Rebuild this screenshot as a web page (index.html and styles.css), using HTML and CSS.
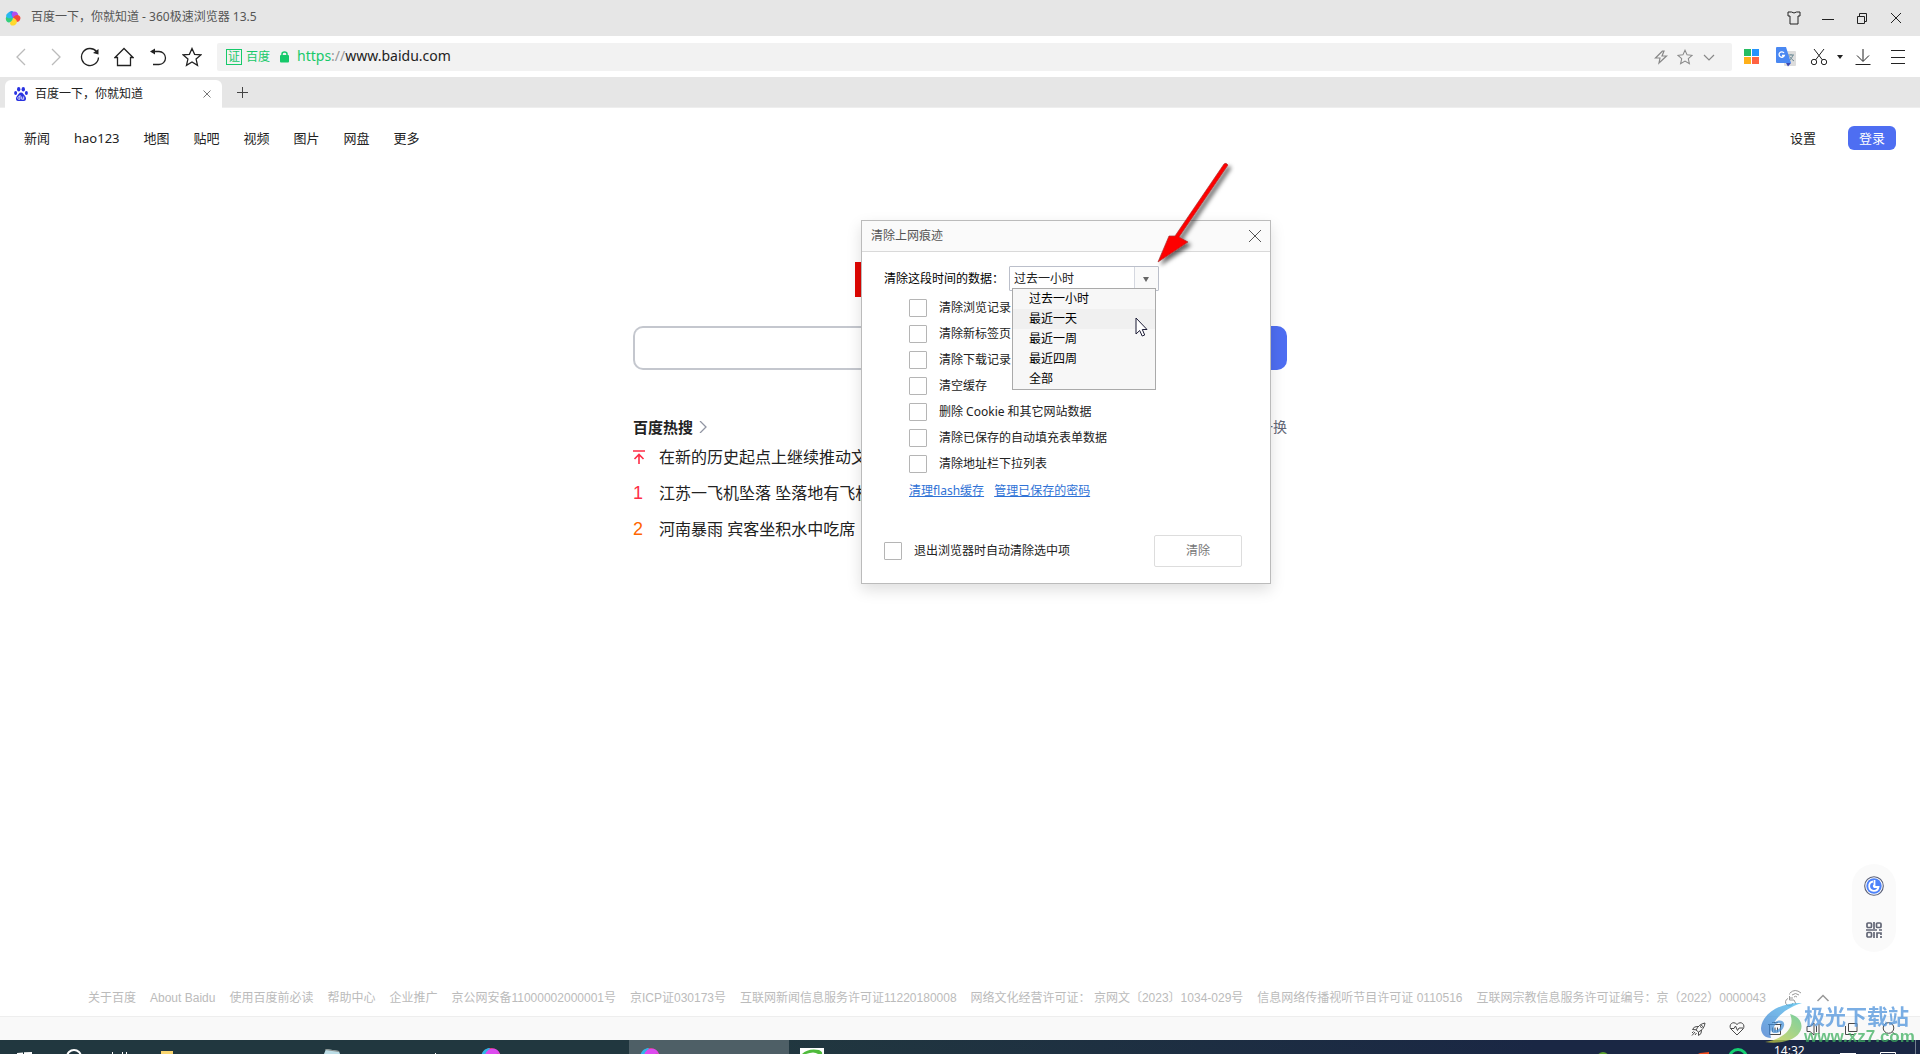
FILE: index.html
```html
<!DOCTYPE html>
<html lang="zh-CN">
<head>
<meta charset="utf-8">
<title>百度一下，你就知道</title>
<link rel="stylesheet" href="styles.css">
</head>
<body>
<svg class="defs" width="0" height="0" aria-hidden="true">
  <symbol id="pinwheel" viewBox="0 0 16 16">
    <path d="M8 8C3 8 2 3 5 1.500Q8 0 9.500 3Z" fill="#3a7df0"/>
    <path d="M8 8C5 4 8 0 11.500 2Q14 4 13 6Z" fill="#b04df0"/>
    <path d="M8 8C10 4 15 4 15.500 8Q15 12 11.500 12Z" fill="#f5483c"/>
    <path d="M8 8C13 9 13 14 9 15.500Q5 16 5 13Z" fill="#ffd92e"/>
    <path d="M8 8C7 13 2 14 1 10Q0 7 3 5.500Z" fill="#34cf7c"/>
    <path d="M8 8C4 9 0 8 1.500 4.500Q3 2 5 2Z" fill="#27b8f0"/>
  </symbol>
  <symbol id="star" viewBox="0 0 20 20"><path d="M10 1.500L12.600 7.300 18.800 7.900 14.100 12.100 15.500 18.300 10 15 4.500 18.300 5.900 12.100 1.200 7.900 7.400 7.300Z" fill="none" stroke="currentColor" stroke-width="1.300"/></symbol>
  <symbol id="orb" viewBox="0 0 20 20">
    <circle cx="10" cy="10" r="10" fill="#e83c4e"/>
    <path d="M0 10C0 4 4 0 9 0L5 10Z" fill="#2fb4e8"/><path d="M4 7C6-1 16-2 19 6Q12 5 9 10Z" fill="#dc4af0"/>
  </symbol>
</svg>

<header class="titlebar">
  <svg class="app-logo" width="16" height="16"><use href="#pinwheel"/></svg>
  <span class="window-title">百度一下，你就知道 - 360极速浏览器 13.5</span>
  <div class="window-buttons">
    <button aria-label="皮肤"><svg width="14" height="14" viewBox="0 0 14 14"><path d="M1 1H4.500Q7 3 9.500 1H13V5H11V13H3V5H1Z"/></svg></button>
    <button aria-label="最小化"><svg width="14" height="14" viewBox="0 0 14 14"><path d="M1 8.500H13"/></svg></button>
    <button aria-label="还原"><svg width="14" height="14" viewBox="0 0 14 14"><path d="M2.500 5.500H9.500V12.500H2.500ZM4.500 5V2.500H11.500V10.500H10"/></svg></button>
    <button aria-label="关闭"><svg width="14" height="14" viewBox="0 0 14 14"><path d="M2 2L12 12M12 2L2 12"/></svg></button>
  </div>
</header>

<div class="toolbar">
  <div class="nav-buttons">
    <button aria-label="后退" class="faded"><svg width="20" height="20" viewBox="0 0 20 20"><path d="M14 2L6 10 14 18"/></svg></button>
    <button aria-label="前进" class="faded"><svg width="20" height="20" viewBox="0 0 20 20"><path d="M6 2L14 10 6 18"/></svg></button>
    <button aria-label="刷新"><svg width="20" height="20" viewBox="0 0 20 20"><path d="M16.500 4.500A8.500 8.500 0 1 0 18.500 10.500"/><path d="M18.500 2V7.500L13 6Z" fill="currentColor" stroke="none"/></svg></button>
    <button aria-label="主页"><svg width="20" height="20" viewBox="0 0 20 20"><path d="M1 10.500L10 1.500 19 10.500H16.500V18.500H3.500V10.500Z"/></svg></button>
    <button aria-label="恢复"><svg width="20" height="20" viewBox="0 0 20 20"><path d="M4 4.500H11A6.500 6.500 0 0 1 11 17.500H5"/><path d="M2 4.500L7 1.500V7.500Z" fill="currentColor" stroke="none"/></svg></button>
    <button aria-label="收藏"><svg width="20" height="20"><use href="#star"/></svg></button>
  </div>
  <div class="address">
    <span class="cert">证</span>
    <span class="site">百度</span>
    <svg class="lock" width="9" height="12" viewBox="0 0 9 12"><rect y="4" width="9" height="7.500" rx="1" fill="#16c96a"/><path d="M2 5V3Q2 1 4.500 1T7 3V5" fill="none" stroke="#16c96a" stroke-width="1.500"/></svg>
    <span class="url"><span class="scheme">https</span><span class="slashes">://</span>www.baidu.com</span>
    <div class="address-icons">
      <svg width="16" height="16" viewBox="0 0 16 16"><path d="M9.500 2L2.500 9H7L6 14 13.500 7H9L11 2Z"/></svg>
      <svg width="16" height="16"><use href="#star"/></svg>
      <svg width="16" height="16" viewBox="0 0 16 16"><path d="M3 6L8 11 13 6"/></svg>
    </div>
  </div>
  <div class="extensions">
    <button class="w38" aria-label="应用"><svg width="15" height="15" viewBox="0 0 15 15"><g stroke="none"><path fill="#26bd62" d="M0 0H7V7H0z"/><path fill="#2693fc" d="M8 0H15V7H8z"/><path fill="#ffb01a" d="M0 8H7V15H0z"/><path fill="#ff6242" d="M8 8H15V15H8z"/></g></svg></button>
    <button class="w32" aria-label="翻译"><svg width="20" height="20" viewBox="0 0 20 20"><g stroke="none"><rect x="8" y="4" width="12" height="15" rx="1" fill="#dcdcdc"/><path d="M12 8H18M15 7V8M17 8Q16 12 12.500 14M13.500 9.500Q15 12 18 14" stroke="#6f8c97" fill="none"/><path d="M1 0H10L15 16H1Q0 16 0 15V1Q0 0 1 0Z" fill="#4a88f2"/><path d="M10 16H15L12 19.500Z" fill="#3948b5"/><path d="M8 6A2.700 2.700 0 1 0 8.300 8.500H6" stroke="#fff" stroke-width="1.300" fill="none"/></g></svg></button>
    <button class="w34" aria-label="截图"><svg width="18" height="18" viewBox="0 0 18 18"><path d="M4 1L12.500 12M14 1L5.500 12"/><circle cx="4" cy="14" r="2.700"/><circle cx="14" cy="14" r="2.700"/></svg></button>
    <button class="w8" aria-label="更多截图选项"><svg width="6" height="4" viewBox="0 0 6 4"><path d="M0 0H6L3 4Z" fill="currentColor" stroke="none"/></svg></button>
    <button class="w38" aria-label="下载"><svg width="18" height="18" viewBox="0 0 18 18"><path d="M9 1V13M3 7.500L9 13.500 15 7.500M1.500 16.500H16.500"/></svg></button>
    <button class="w32" aria-label="菜单"><svg width="16" height="16" viewBox="0 0 16 16"><path d="M1 1.500H15M1 8.500H15M1 14.500H15"/></svg></button>
  </div>
</div>

<div class="tabstrip">
  <div class="tab">
    <svg width="14" height="14" viewBox="0 0 14 14" fill="#2932e1"><ellipse cx="4.700" cy="2.300" rx="1.700" ry="2.200"/><ellipse cx="9.300" cy="2.300" rx="1.700" ry="2.200"/><ellipse cx="1.600" cy="6" rx="1.500" ry="2"/><ellipse cx="12.400" cy="6" rx="1.500" ry="2"/><path d="M7 5.500C9 5.500 9.500 7.500 11 9S12.500 14 10 14H4C1.500 14 1.500 10.500 3 9S5 5.500 7 5.500Z"/><path d="M6 8V12.200H4.500A1.300 1.300 0 0 1 4.500 9.800H6M7.700 9.500V12.200H9.700V9.500" fill="none" stroke="#fff" stroke-width=".8"/></svg>
    <span class="tab-title">百度一下，你就知道</span>
    <button aria-label="关闭标签"><svg width="8" height="8" viewBox="0 0 8 8"><path d="M.5 .5L7.500 7.500M7.500 .5L.5 7.500"/></svg></button>
  </div>
  <button class="new-tab" aria-label="新标签"><svg width="12" height="12" viewBox="0 0 12 12"><path d="M6.500 1V12M1 6.500H12"/></svg></button>
</div>

<main class="page">
  <nav class="links">
    <a href="#">新闻</a><a href="#">hao123</a><a href="#">地图</a><a href="#">贴吧</a><a href="#">视频</a><a href="#">图片</a><a href="#">网盘</a><a href="#">更多</a>
    <a href="#" class="settings">设置</a>
    <button class="login">登录</button>
  </nav>
  <section class="center">
    <div class="brand"></div>
    <form class="search">
      <input type="text" aria-label="搜索">
      <button type="button" aria-label="百度一下"></button>
    </form>
    <div class="hot-head">
      <a href="#" class="hot-title">百度热搜</a>
      <svg width="8" height="12" viewBox="0 0 8 12"><path d="M1 0L7 6 1 12" fill="none" stroke="#9195a3" stroke-width="1.300"/></svg>
      <a href="#" class="swap">换一换</a>
    </div>
    <ol class="hot-list">
      <li><span class="rank r0"><svg width="12" height="14" viewBox="0 0 12 14"><path d="M0 1H12M6 14V5M1.500 9L6 4.500 10.500 9" fill="none" stroke="#fe2d46" stroke-width="1.600"/></svg></span><a href="#">在新的历史起点上继续推动文</a></li>
      <li><span class="rank r1">1</span><a href="#">江苏一飞机坠落 坠落地有飞机</a></li>
      <li><span class="rank r2">2</span><a href="#">河南暴雨 宾客坐积水中吃席</a><span class="tag"></span></li>
    </ol>
  </section>
  <aside class="side-tools">
    <button aria-label="助手"><svg width="20" height="20" viewBox="0 0 20 20"><circle cx="10" cy="10" r="9.300" fill="#fff" stroke="#5a6078" stroke-width="1.100"/><circle cx="10" cy="10" r="7.700" fill="#4e83fa"/><path d="M9 5.500A4.700 4.700 0 1 0 14.500 11H10.500V4" fill="none" stroke="#fff" stroke-width="1.800"/><circle cx="10" cy="10" r="1.200" fill="#fff"/></svg></button>
    <button aria-label="二维码"><svg width="16" height="16" viewBox="0 0 16 16" fill="none" stroke="#626675" stroke-width="1.700"><rect x="1" y="1" width="4.500" height="4.500" rx="1"/><rect x="10.500" y="1" width="4.500" height="4.500" rx="1"/><rect x="1" y="10.500" width="4.500" height="4.500" rx="1"/><path d="M8 0V7M0 8H11M13 8H16M8 10V16M11 16V11H15V13M15 14V16"/></svg></button>
  </aside>
  <footer class="legal">
    <a href="#">关于百度</a><a href="#">About Baidu</a><a href="#">使用百度前必读</a><a href="#">帮助中心</a><a href="#">企业推广</a><a href="#">京公网安备11000002000001号</a><a href="#">京ICP证030173号</a><span>互联网新闻信息服务许可证11220180008</span><span>网络文化经营许可证： 京网文〔2023〕1034-029号</span><span>信息网络传播视听节目许可证 0110516</span><span>互联网宗教信息服务许可证编号：京（2022）0000043</span>
    <svg class="access" width="18" height="18" viewBox="0 0 18 18"><path d="M5.500 7V11H10L12 15M5.500 9H9M4 9.500A3.800 3.800 0 1 0 9 14M5.500 4.500V5.500M6 4Q11-1 17 4M8 6Q11.500 3 15 6M10 8Q11.500 6.500 13 8"/></svg>
    <svg width="14" height="8" viewBox="0 0 14 8"><path d="M1.500 7L7 1.500 12.500 7" stroke-width="1.500"/></svg>
  </footer>
</main>

<div class="statusbar">
  <svg width="16" height="16" viewBox="0 0 16 16"><path d="M5 9Q8 3 14 2Q13.500 8 7.500 11ZM7 5.500L3.500 6 1.500 8.500 5 8.800M10.500 9L10 12.500 7.500 14.500 7.500 11M4 11L1 14.500M5.500 12L4 14M2.500 10.500L1 12"/><circle cx="10.500" cy="5.500" r="1"/></svg>
  <svg width="16" height="16" viewBox="0 0 16 16"><path d="M8 14L2 8C-1 4 4-1 8 3.500C12-1 17 4 14 8ZM1.500 7.500H5L6.500 5 8.500 9.500 10 7H14"/></svg>
  <svg width="16" height="16" viewBox="0 0 16 16"><path d="M2.500 4V13.500H13.500V4M1 3.500H15M5 1.500H11M5.500 6.500V11M8 6.500V11M10.500 6.500V11"/></svg>
  <svg width="16" height="16" viewBox="0 0 16 16"><path d="M2 5.500H5L9 2V14L5 10.500H2ZM11.500 5V11M14 3V13"/></svg>
  <svg width="16" height="16" viewBox="0 0 16 16"><path d="M5.500 2.500H14V10.500H5.500ZM2.500 5V13.500H11"/></svg>
  <svg width="16" height="16" viewBox="0 0 16 16"><circle cx="7.500" cy="7" r="5.300"/><path d="M11.500 11L14.500 14"/></svg>
</div>

<div class="taskbar">
  <svg class="task-left" width="629" height="14" viewBox="0 0 629 14">
    <path d="M17 13L23 12.500V14H17ZM24 12.300L32 12V14H24Z" fill="#fff"/>
    <circle cx="74" cy="17" r="7" fill="none" stroke="#fff" stroke-width="2"/>
    <path d="M112.500 12V14M122.500 12V14M126.500 12V14M435.500 13V14" stroke="#fff"/>
    <path d="M161 11H173V14H161Z" fill="#f9d56e"/>
    <path d="M326 9L339 11 340 14H324Z" fill="#bcdde6"/><path d="M326 9L339 11V12L325 10Z" fill="#8a8f8c"/>
    <use href="#orb" x="481" y="8" width="20" height="20"/>
  </svg>
  <div class="task-active"><svg width="20" height="14" viewBox="0 0 20 14"><use href="#orb" y="8" width="20" height="20"/></svg></div>
  <svg class="task-green" width="24" height="6" viewBox="0 0 24 6"><path d="M0 0H24V6H0Z" fill="#fff"/><path d="M2 6Q8 0 19 2Q23 4 22 6H18Q14 3 6 6Z" fill="#4fbb3c"/></svg>
  <div class="tray">
    <svg width="150" height="14" viewBox="0 0 150 14"><circle cx="15" cy="18" r="6" fill="#5aa02c"/><path d="M112 13L121 12V14H110Z" fill="#f04a1c"/><circle cx="150" cy="18" r="8.500" fill="none" stroke="#16d071" stroke-width="3"/></svg>
    <svg width="12" height="14" viewBox="0 0 12 14"><circle cx="0" cy="18" r="8.500" fill="none" stroke="#16d071" stroke-width="3"/></svg>
    <span class="clock">14:32</span>
    <svg class="tray-end" width="88" height="14" viewBox="0 0 88 14"><path d="M12 13H28V14H12Z" fill="#fff"/><path d="M52.500 14V12.500H67.500V14" fill="none" stroke="#fff"/><path d="M87.500 0V14" stroke="#74808f"/></svg>
  </div>
</div>

<div class="dialog" role="dialog" aria-labelledby="dlg-title">
  <div class="dialog-head">
    <span id="dlg-title">清除上网痕迹</span>
    <button aria-label="关闭"><svg width="12" height="12" viewBox="0 0 12 12"><path d="M0 0L12 12M12 0L0 12"/></svg></button>
  </div>
  <div class="dialog-body">
    <div class="range">
      <label for="range">清除这段时间的数据：</label>
      <div class="combo">
        <select id="range"><option>过去一小时</option><option>最近一天</option><option>最近一周</option><option>最近四周</option><option>全部</option></select>
        <span class="combo-arrow"></span>
        <ul class="options">
          <li>过去一小时</li><li class="hover">最近一天</li><li>最近一周</li><li>最近四周</li><li>全部</li>
        </ul>
      </div>
    </div>
    <div class="checks">
      <label><input type="checkbox">清除浏览记录</label>
      <label><input type="checkbox">清除新标签页</label>
      <label><input type="checkbox">清除下载记录</label>
      <label><input type="checkbox">清空缓存</label>
      <label><input type="checkbox">删除 Cookie 和其它网站数据</label>
      <label><input type="checkbox">清除已保存的自动填充表单数据</label>
      <label><input type="checkbox">清除地址栏下拉列表</label>
    </div>
    <div class="more"><a href="#">清理flash缓存</a><a href="#">管理已保存的密码</a></div>
    <div class="actions">
      <label><input type="checkbox">退出浏览器时自动清除选中项</label>
      <button>清除</button>
    </div>
  </div>
</div>

<svg class="pointer-arrow" width="84" height="112" viewBox="0 0 84 112">
  <defs><filter id="soft" x="-20%" y="-20%" width="150%" height="150%"><feDropShadow dx="3" dy="3" stdDeviation="2" flood-color="#000" flood-opacity=".6"/></filter></defs>
  <path d="M73 5Q75 3 77 6L28 78 37 83 7 103 18 77 24 77Z" fill="#fe0000" stroke="#a33" stroke-width=".7" filter="url(#soft)"/>
</svg>
<svg class="cursor" width="13" height="20" viewBox="0 0 13 20"><path d="M1 1V17L4.700 13.500 7.200 19 9.700 18 7.300 12.500H12Z" fill="#fff" stroke="#1b1b35"/></svg>

<div class="watermark">
  <svg width="44" height="42" viewBox="0 0 44 42">
    <defs>
      <linearGradient id="wb" x1="1" y1="0" x2="0" y2="1"><stop offset="0" stop-color="#4cc0ee"/><stop offset="1" stop-color="#3f78cf"/></linearGradient>
      <linearGradient id="wg" x1="1" y1="0" x2="0" y2="1"><stop offset="0" stop-color="#4fc283"/><stop offset="1" stop-color="#d6cf3c"/></linearGradient>
    </defs>
    <path d="M42 1C20 0 2 12 1 26C1 32 5 36 11 36C8 26 18 8 42 1Z" fill="url(#wb)"/>
    <path d="M30 12C46 16 46 34 26 39Q16 42 5 40C24 37 36 26 30 12Z" fill="url(#wg)"/>
    <path d="M11 26C14 16 26 17 24 24C22 32 10 34 11 26ZM14 26C15 30 21 27 21 23C20 19 14 22 14 26Z" fill="#4a93d8"/>
  </svg>
  <div class="wm-text"><span class="wm-name">极光下载站</span><span class="wm-url">www.xz7.com</span></div>
</div>
</body>
</html>
```
FILE: styles.css
```css
* { box-sizing: border-box; }
body {
  margin: 0;
  min-height: 100vh;
  display: flex;
  flex-direction: column;
  position: relative;
  overflow: hidden;
  background: #fff;
  color: #222;
  font: 12px/16px "Noto Sans", "Noto Sans CJK SC", sans-serif;
}
.defs { position: absolute; }
button {
  border: 0;
  padding: 0;
  background: none;
  font: inherit;
  color: inherit;
  display: flex;
  align-items: center;
  justify-content: center;
}
a { color: inherit; text-decoration: none; }
svg { flex: none; }

/* window chrome */
.titlebar {
  height: 36px;
  padding: 0 7px 0 5px;
  display: flex;
  align-items: center;
  background: #e6e6e6;
  color: #555;
}
.window-title { margin-left: 10px; padding-bottom: 2px; }
.window-buttons { margin-left: auto; display: flex; color: #222; }
.window-buttons button { width: 34px; height: 36px; }
.window-buttons svg, .nav-buttons svg, .extensions svg, .tabstrip button svg, .dialog-head svg {
  fill: none;
  stroke: currentColor;
}
.toolbar {
  height: 41px;
  padding: 0 6px 0 3px;
  display: flex;
  align-items: center;
}
.nav-buttons { display: flex; width: 214px; color: #222; }
.nav-buttons button { width: 34px; height: 34px; }
.nav-buttons .faded { width: 35px; color: #bbb; }
.nav-buttons svg { stroke-width: 1.3; }
.address {
  flex: 1;
  height: 28px;
  padding: 0 15px 0 9px;
  display: flex;
  align-items: center;
  border-radius: 2px;
  background: #f2f2f2;
}
.cert {
  width: 16px;
  height: 16px;
  border: 1px solid #16c96a;
  line-height: 14px;
  text-align: center;
  color: #16c96a;
}
.site { margin-left: 4px; color: #16c96a; }
.lock { margin-left: 10px; }
.url { margin-left: 8px; font-size: 14px; line-height: 20px; padding-bottom: 2px; }
.scheme { color: #16c96a; }
.slashes { color: #999; }
.address-icons { margin-left: auto; display: flex; gap: 8px; color: #888; }
.address-icons svg { fill: none; stroke: currentColor; stroke-width: 1.2; }
.extensions { display: flex; align-items: center; }
.w8 { width: 8px; }
.w32 { width: 32px; }
.w34 { width: 34px; }
.w38 { width: 38px; }
.tabstrip {
  height: 31px;
  padding: 3px 5px 0;
  display: flex;
  background: #e6e6e6;
  border-bottom: 1px solid #eee;
}
.tab {
  width: 217px;
  height: 28px;
  padding: 0 11px 1px 9px;
  display: flex;
  align-items: center;
  border-radius: 6px 6px 0 0;
  background: #fff;
}
.tab-title { margin-left: 7px; }
.tab button { margin-left: auto; color: #777; }
.new-tab { margin-left: 14px; width: 12px; height: 24px; color: #444; }

/* page */
.page {
  flex: 1;
  display: flex;
  flex-direction: column;
  position: relative;
}
.links {
  height: 60px;
  padding: 0 24px;
  display: flex;
  align-items: center;
  gap: 24px;
  font-size: 13px;
}
.settings { margin-left: auto; }
.login {
  width: 48px;
  height: 24px;
  margin-left: 8px;
  border-radius: 6px;
  background: #4e6ef2;
  color: #fff;
}
.center { width: 654px; margin: 94px auto 0; }
.brand {
  width: 210px;
  height: 35px;
  margin: 0 auto 29px;
  background: #e10602;
}
.search { display: flex; height: 44px; }
.search input {
  flex: 1;
  border: 2px solid #c4c7ce;
  border-right: 0;
  border-radius: 10px 0 0 10px;
  padding: 0 12px;
  font: inherit;
}
.search button { width: 108px; border-radius: 0 10px 10px 0; background: #4e6ef2; }
.hot-head {
  height: 24px;
  margin-top: 45px;
  display: flex;
  align-items: center;
  gap: 6px;
}
.hot-title { font-size: 15px; font-weight: 700; }
.swap { margin-left: auto; font-size: 14px; color: #626675; }
.hot-list { margin: 0; padding: 0; list-style: none; }
.hot-list li {
  height: 36px;
  display: flex;
  align-items: center;
  font-size: 16px;
  line-height: 24px;
  white-space: nowrap;
}
.rank { width: 26px; font: 18px/24px "Liberation Sans", sans-serif; }
.r0 svg { display: block; }
.r1 { color: #fe2d46; }
.r2 { color: #f60; }
.tag { width: 16px; height: 14px; margin-left: 6px; background: #f60; border-radius: 2px; }
.side-tools {
  position: absolute;
  right: 24px;
  bottom: 64px;
  width: 44px;
  height: 88px;
  border-radius: 22px;
  background: #fafafa;
}
.side-tools button { width: 44px; height: 44px; }
.legal {
  margin-top: auto;
  height: 38px;
  padding: 2px 0 0 88px;
  display: flex;
  align-items: center;
  gap: 14px;
  font-family: "Liberation Sans", "Noto Sans CJK SC", sans-serif;
  color: #bbb;
  white-space: nowrap;
}
.legal svg { fill: none; stroke: #999; }
.access { margin-left: 4px; }

/* bottom bars */
.statusbar {
  height: 24px;
  padding-right: 23px;
  display: flex;
  align-items: center;
  justify-content: flex-end;
  gap: 22px;
  border-top: 1px solid #eee;
  background: #f9f9f9;
}
.statusbar svg { fill: none; stroke: #4a4a4a; }
.taskbar {
  height: 14px;
  display: flex;
  overflow: hidden;
  background: linear-gradient(90deg, #21373f 0, #21373f 40%, #1a2744 80%);
}
.task-active { width: 160px; padding-left: 11px; background: #4e5f66; }
.task-green { margin: 8px 0 0 11px; }
.tray { margin-left: auto; padding-right: 4px; display: flex; }
.clock { width: 52px; padding-left: 24px; line-height: 22px; color: #fff; }
.tray-end { margin-left: 26px; }

/* clear-history dialog */
.dialog {
  position: absolute;
  left: calc(50% - 99px);
  top: 220px;
  width: 410px;
  border: 1px solid #bbb;
  background: #fff;
  box-shadow: 0 6px 14px rgba(0, 0, 0, .13);
}
.dialog-head {
  height: 31px;
  padding: 0 9px;
  display: flex;
  align-items: center;
  justify-content: space-between;
  border-bottom: 1px solid #d9d9d9;
  background: #fafafa;
  color: #555;
}
.dialog-body { padding: 14px 28px 16px 22px; }
.range { display: flex; align-items: center; color: #000; }
.range label { width: 125px; white-space: nowrap; }
.combo { position: relative; width: 150px; height: 25px; }
.combo select {
  appearance: none;
  width: 100%;
  height: 25px;
  padding: 0 4px;
  border: 1px solid #bbbfca;
  border-radius: 1px;
  background: #fff;
  font: inherit;
  color: #222;
}
.combo-arrow {
  position: absolute;
  right: 1px;
  top: 1px;
  width: 24px;
  height: 23px;
  border-left: 1px solid #d5d8e0;
  background: #fafafa;
  pointer-events: none;
}
.combo-arrow::after {
  content: "";
  position: absolute;
  left: 8px;
  top: 10px;
  border: 3px solid transparent;
  border-top: 5px solid #666;
  border-bottom: 0;
}
.options {
  position: absolute;
  left: 3px;
  top: 22px;
  width: 144px;
  margin: 0;
  padding: 0;
  list-style: none;
  border: 1px solid #aaa;
  background: #f7f7f7;
}
.options li { height: 20px; padding-left: 16px; line-height: 20px; }
.options .hover { background: #f0f0f0; }
.checks { padding: 4px 0 0 25px; }
.checks label, .actions label { display: flex; align-items: center; gap: 12px; height: 26px; }
input[type="checkbox"] {
  appearance: none;
  width: 18px;
  height: 18px;
  margin: 0;
  border: 1px solid #b5b5b5;
  border-radius: 1px;
  background: #fff;
}
.more { padding: 6px 0 0 25px; display: flex; gap: 10px; color: #2f72d6; }
.more a { text-decoration: underline; }
.actions { margin-top: 36px; display: flex; align-items: center; justify-content: space-between; }
.actions button {
  width: 88px;
  height: 32px;
  border: 1px solid #ddd;
  border-radius: 2px;
  color: #777;
}

/* overlays */
.pointer-arrow { position: absolute; left: calc(50% + 191px); top: 159px; }
.cursor { position: absolute; left: calc(50% + 175px); top: 317px; }
.watermark {
  position: absolute;
  right: 10px;
  bottom: 8px;
  display: flex;
  opacity: .75;
}
.wm-text { width: 106px; display: flex; flex-direction: column; white-space: nowrap; }
.wm-name { font: 700 21px/26px "Noto Sans CJK SC", sans-serif; color: #4f94dc; }
.wm-url { font: 700 17px/18px "Liberation Sans", sans-serif; color: #3fb060; }
```
